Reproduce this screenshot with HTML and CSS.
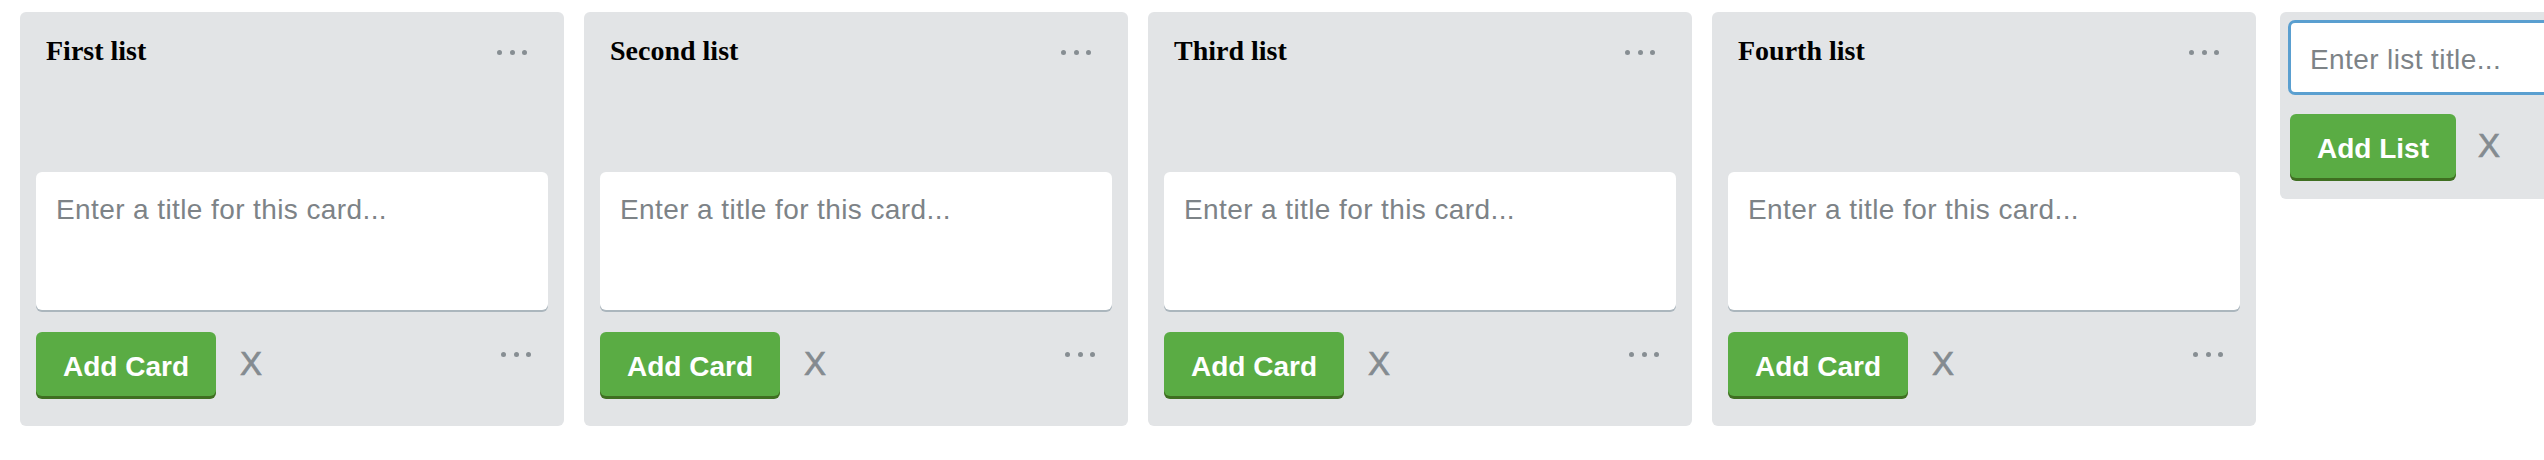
FILE: index.html
```html
<!DOCTYPE html>
<html lang="en">
<head>
<meta charset="utf-8">
<title>Board</title>
<link rel="stylesheet" href="styles.css">
</head>
<body>
<div class="board">
  <section class="list">
    <header class="list-header">
      <h2 class="list-title">First list</h2>
      <span class="dots"><i></i><i></i><i></i></span>
    </header>
    <div class="list-cards"></div>
    <textarea class="card-composer" placeholder="Enter a title for this card..."></textarea>
    <div class="composer-controls">
      <button class="btn-add">Add Card</button>
      <button class="btn-cancel">X</button>
      <span class="dots dots-bottom"><i></i><i></i><i></i></span>
    </div>
  </section>
  <section class="list">
    <header class="list-header">
      <h2 class="list-title">Second list</h2>
      <span class="dots"><i></i><i></i><i></i></span>
    </header>
    <div class="list-cards"></div>
    <textarea class="card-composer" placeholder="Enter a title for this card..."></textarea>
    <div class="composer-controls">
      <button class="btn-add">Add Card</button>
      <button class="btn-cancel">X</button>
      <span class="dots dots-bottom"><i></i><i></i><i></i></span>
    </div>
  </section>
  <section class="list">
    <header class="list-header">
      <h2 class="list-title">Third list</h2>
      <span class="dots"><i></i><i></i><i></i></span>
    </header>
    <div class="list-cards"></div>
    <textarea class="card-composer" placeholder="Enter a title for this card..."></textarea>
    <div class="composer-controls">
      <button class="btn-add">Add Card</button>
      <button class="btn-cancel">X</button>
      <span class="dots dots-bottom"><i></i><i></i><i></i></span>
    </div>
  </section>
  <section class="list">
    <header class="list-header">
      <h2 class="list-title">Fourth list</h2>
      <span class="dots"><i></i><i></i><i></i></span>
    </header>
    <div class="list-cards"></div>
    <textarea class="card-composer" placeholder="Enter a title for this card..."></textarea>
    <div class="composer-controls">
      <button class="btn-add">Add Card</button>
      <button class="btn-cancel">X</button>
      <span class="dots dots-bottom"><i></i><i></i><i></i></span>
    </div>
  </section>
  <section class="add-list">
    <input class="list-input" type="text" placeholder="Enter list title...">
    <div class="composer-controls add-controls">
      <button class="btn-add">Add List</button>
      <button class="btn-cancel">X</button>
    </div>
  </section>
</div>
</body>
</html>
```

FILE: styles.css
```css
html, body {
  margin: 0;
  padding: 0;
}

body {
  background: #ffffff;
  font-family: "Liberation Sans", Arial, sans-serif;
  overflow: hidden;
}

.board {
  display: flex;
  align-items: flex-start;
  gap: 20px;
  padding: 12px 0 0 20px;
}

.list {
  flex: 0 0 544px;
  width: 544px;
  box-sizing: border-box;
  background: #e2e4e6;
  border-radius: 6px;
  padding: 16px;
  display: flex;
  flex-direction: column;
}

.list-header {
  display: flex;
  align-items: flex-start;
  padding: 7px 21px 0 10px;
}

.list-title {
  flex: 1;
  margin: 0;
  font: bold 28px/32px "Liberation Serif", "Times New Roman", serif;
  color: #000;
}

.dots {
  display: flex;
  gap: 7.5px;
  margin-top: 15px;
}

.dots i {
  display: block;
  width: 5px;
  height: 5px;
  border-radius: 50%;
  background: #878e93;
}

.list-cards {
  height: 105px;
}

.card-composer {
  display: block;
  box-sizing: border-box;
  width: 100%;
  height: 138px;
  margin: 0;
  padding: 20px;
  border: none;
  border-radius: 6px;
  background: #fff;
  box-shadow: 0 2px 0 rgba(9, 45, 66, 0.25);
  resize: none;
  outline: none;
  font: 28px/36px "Liberation Sans", Arial, sans-serif;
  letter-spacing: 0.4px;
  color: #333;
}

.card-composer::placeholder,
.list-input::placeholder {
  color: #7d8387;
  opacity: 1;
}

.composer-controls {
  display: flex;
  align-items: center;
  margin-top: 22px;
  margin-bottom: 14px;
}

.btn-add {
  box-sizing: border-box;
  height: 64px;
  padding: 5px 27px 0;
  background: #5aac44;
  color: #fff;
  border: none;
  border-radius: 6px;
  box-shadow: 0 3px 0 #3f6f21;
  font: bold 28px/28px "Liberation Sans", Arial, sans-serif;
  cursor: pointer;
}

.btn-cancel {
  background: none;
  border: none;
  padding: 0;
  margin-left: 24px;
  font: 33px/38px "Liberation Sans", Arial, sans-serif;
  -webkit-text-stroke: 0.7px #848b90;
  color: #848b90;
  cursor: pointer;
}

.dots-bottom {
  margin-left: auto;
  margin-right: 17px;
  align-self: flex-start;
  margin-top: 19.5px;
}

.add-list {
  flex: 0 0 544px;
  width: 544px;
  box-sizing: border-box;
  margin-left: 4px;
  background: #e2e4e6;
  border-radius: 6px;
  padding: 8px;
}

.list-input {
  display: block;
  box-sizing: border-box;
  width: 100%;
  height: 75px;
  margin: 0;
  padding: 4px 19px 0;
  border: 3px solid #5a9fd0;
  border-radius: 7px;
  background: #fff;
  outline: none;
  font: 28px "Liberation Sans", Arial, sans-serif;
  letter-spacing: 0.4px;
  color: #333;
}

.add-controls {
  margin-top: 19px;
  margin-bottom: 13px;
}

.add-controls .btn-add {
  margin-left: 2px;
}

.add-controls .btn-cancel {
  margin-left: 22px;
}
```
